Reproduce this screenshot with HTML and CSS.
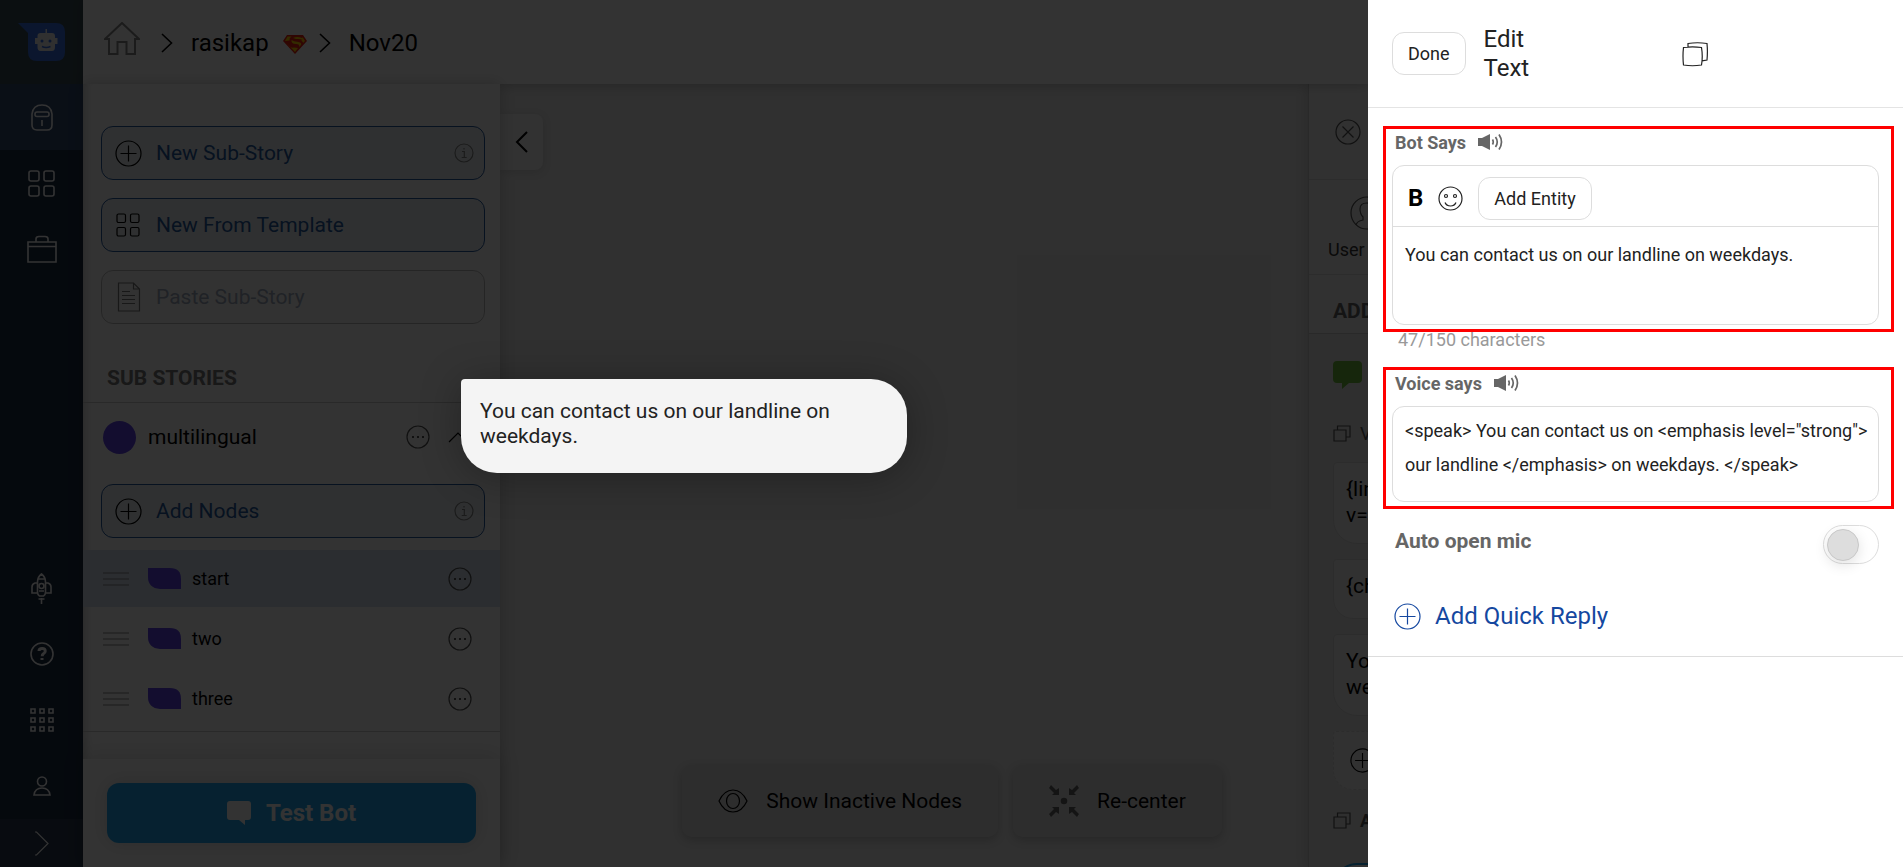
FILE: index.html
```html
<!DOCTYPE html>
<html lang="en">
<head>
<meta charset="utf-8">
<title>Bot builder</title>
<link rel="stylesheet" href="styles.css">
</head>
<body>
<svg class="defs" aria-hidden="true">
  <symbol id="plus" viewBox="0 0 27 27"><circle cx="13.5" cy="13.5" r="12.5"/><path d="M13.5 5.500v16M5.500 13.500h16"/></symbol>
  <symbol id="info" viewBox="0 0 20 20"><circle cx="10" cy="10" r="9"/><path d="M8 8.500h2.300v6M7.700 14.500h5M10 5v1.500"/></symbol>
  <symbol id="more" viewBox="0 0 24 24"><circle cx="12" cy="12" r="11"/><path d="M6 12h2M11 12h2M16 12h2" stroke-width="2"/></symbol>
  <symbol id="grip" viewBox="0 0 26 14"><path d="M0 1.500h26M0 7.500h26M0 13.500h26"/></symbol>
  <symbol id="node" viewBox="0 0 33 21"><path d="M0 0h22q11 0 11 11v10H12Q0 20 0 9z"/></symbol>
  <symbol id="copy" viewBox="0 0 26 26"><path d="M1.500 6.500q9-1.200 18 0 1.500 9 0 17.500-9 1.500-18 0-1-9 0-17.500zM6 6V2.500q9.500-1.500 19 0 .8 8 0 16.500l-5 .8"/></symbol>
  <symbol id="copy-square" viewBox="0 0 18 17"><path d="M1 5h12v11H1zM4.500 4.500V1H17v11h-3.500"/></symbol>
  <symbol id="speaker" viewBox="0 0 25 18"><path d="M0 5h4l8-4v16l-8-4H0z" fill="currentColor" stroke="none"/><path d="M14.500 6.500q1.500 2.500 0 5M17.500 4q3.500 5 0 10M21 1.500q5 7.500 0 15" stroke-width="1.700"/></symbol>
  <symbol id="chev" viewBox="0 0 12 20"><path d="M1 1l9.500 9L1 19"/></symbol>
</svg>
<div class="page">
  <div class="app">
    <nav class="rail" aria-label="Main">
      <a class="rail-logo" href="#" aria-label="Home">
        <svg width="48" height="39" viewBox="0 0 48 39"><path d="M0 0h38q9 0 9 9v20q0 9-9 9H19q-9 0-9-9V10z" fill="#3870e4"/><path d="M27.500 6h1.500v4h5q3 0 3 3v2h2.500v6H37v3q0 4-3 4H22.500q-3 0-3-4v-3H17v-6h2.500v-2q0-3 3-3h5z" fill="#eee"/><circle cx="24" cy="18" r="1.500" fill="#3870e4"/><circle cx="32" cy="18" r="1.500" fill="#3870e4"/><path d="M24 23.500q4 2 8.500 0" stroke="#3870e4" fill="none" stroke-width="1.500"/></svg>
      </a>
      <a class="rail-item active" href="#" aria-label="Bot"><svg width="22" height="27" viewBox="0 0 22 27"><path d="M1 10Q2 1 11 1t10 9v11q0 5-5 5H6q-5 0-5-5zM11 16v6"/><rect x="4" y="8" width="14" height="4.500" rx="2"/></svg></a>
      <a class="rail-item" href="#" aria-label="Templates"><svg width="27" height="27" viewBox="0 0 27 27"><rect x="1" y="1" width="10" height="10" rx="2"/><rect x="16" y="1" width="10" height="10" rx="2"/><rect x="1" y="16" width="10" height="10" rx="2"/><rect x="16" y="16" width="10" height="10" rx="2"/></svg></a>
      <a class="rail-item" href="#" aria-label="Business"><svg width="30" height="28" viewBox="0 0 30 28"><path d="M1 7h28v20H1zM1 11.500h28M9 7V4q0-2.500 3-2.500h6q3 0 3 2.500v3"/></svg></a>
      <a class="rail-item push" href="#" aria-label="Launch"><svg width="21" height="31" viewBox="0 0 21 31" stroke-width="2"><path d="M6.500 19V9q0-5 4-8 4 3 4 8v10q0 3-2 4h-4q-2-1-2-4zM7 6h7M6 10H4q-3 1-3 4v6h5M15 10h2q3 1 3 4v6h-5M8 18h5M7.500 26h6M10.500 25v6"/><circle cx="10.500" cy="13" r="2.500"/></svg></a>
      <a class="rail-item" href="#" aria-label="Help"><svg width="24" height="24" viewBox="0 0 24 24"><circle cx="12" cy="12" r="11"/><path d="M9 9q0-2.500 3.200-2.500T15.200 9.200q0 1.600-1.800 2.600-1.200.7-1.200 2.500M12 16v2" stroke-width="3"/></svg></a>
      <a class="rail-item" href="#" aria-label="Apps"><svg width="24" height="24" viewBox="0 0 24 24"><path d="M1 1h4v4H1zM10 1h4v4h-4zM19 1h4v4h-4zM1 10h4v4H1zM10 10h4v4h-4zM19 10h4v4h-4zM1 19h4v4H1zM10 19h4v4h-4zM19 19h4v4h-4z"/></svg></a>
      <a class="rail-item" href="#" aria-label="Account"><svg width="18" height="20" viewBox="0 0 18 20"><circle cx="9" cy="5.500" r="4.500"/><path d="M1 19q1-7 8-7t8 7z"/></svg></a>
      <button class="rail-expand" aria-label="Expand"><svg width="15" height="25" viewBox="0 0 15 25"><path d="M1 1h1.500L14 12.500 2.500 24H1"/></svg></button>
    </nav>

    <div class="main">
      <header class="topbar">
        <a class="home" href="#" aria-label="Home"><svg width="36" height="33" viewBox="0 0 36 33"><path d="M1 17L18 1l17 16h-4v15h-8.500V20h-9v12H5V17z"/></svg></a>
        <svg class="sep" width="12" height="20"><use href="#chev"/></svg>
        <a class="crumb" href="#">rasikap</a>
        <svg class="emblem" width="24" height="19" viewBox="0 0 24 19"><path d="M4 0h16l4 6-12 13L0 6z" fill="#f02010"/><path d="M4.500 1.500h4Q6 3 6.500 5.500L2 6zM10 3q4-2 9 0l1 2q-3-1.500-7-1zM8.500 5q2 1.500 7 2 3.500.5 2.500 3l-2 2q1-3-3-3-5 0-4.500-4zM19.500 2l2.500 4-2 2q0-2-3-2.500h2zM3 7.500l4 4.500q2 1 4 .5l4 .5-3 4z" fill="#ffd400"/></svg>
        <svg class="sep" width="12" height="20"><use href="#chev"/></svg>
        <a class="crumb" href="#">Nov20</a>
      </header>

      <div class="work">
        <aside class="sidebar">
          <div class="actions">
            <button class="tile"><svg class="ico" width="27" height="27"><use href="#plus"/></svg><span>New Sub-Story</span><svg class="hint" width="20" height="20"><use href="#info"/></svg></button>
            <button class="tile"><svg class="ico" width="27" height="27" viewBox="0 0 27 27"><rect x="2" y="2" width="8.500" height="8.500" rx="1.500"/><rect x="15.500" y="2" width="8.500" height="8.500" rx="1.500"/><rect x="2" y="15.500" width="8.500" height="8.500" rx="1.500"/><rect x="15.500" y="15.500" width="8.500" height="8.500" rx="1.500"/></svg><span>New From Template</span></button>
            <button class="tile off" disabled><svg class="ico" width="27" height="30" viewBox="0 0 27 30"><path d="M3.500 1h15l6 6v22h-21zM18.500 1v6h6M7 9.500h8M7 13.500h13M7 17.500h13M7 21.500h13"/></svg><span>Paste Sub-Story</span></button>
          </div>
          <h2 class="section">SUB STORIES</h2>
          <div class="story">
            <span class="dot"></span><span class="story-name">multilingual</span>
            <button class="plain" aria-label="Story options"><svg class="grey" width="24" height="24"><use href="#more"/></svg></button>
            <button class="plain" aria-label="Collapse story"><svg width="20" height="12" viewBox="0 0 20 12" stroke-width="2"><path d="M1 11l9-9 9 9"/></svg></button>
          </div>
          <div class="actions nodes-add">
            <button class="tile"><svg class="ico" width="27" height="27"><use href="#plus"/></svg><span>Add Nodes</span><svg class="hint" width="20" height="20"><use href="#info"/></svg></button>
          </div>
          <ul class="nodes">
            <li class="node on"><svg class="grip" width="26" height="15"><use href="#grip"/></svg><svg class="leaf" width="33" height="21"><use href="#node"/></svg><span>start</span><button class="plain" aria-label="Options for start"><svg class="grey" width="24" height="24"><use href="#more"/></svg></button></li>
            <li class="node"><svg class="grip" width="26" height="15"><use href="#grip"/></svg><svg class="leaf" width="33" height="21"><use href="#node"/></svg><span>two</span><button class="plain" aria-label="Options for two"><svg class="grey" width="24" height="24"><use href="#more"/></svg></button></li>
            <li class="node"><svg class="grip" width="26" height="15"><use href="#grip"/></svg><svg class="leaf" width="33" height="21"><use href="#node"/></svg><span>three</span><button class="plain" aria-label="Options for three"><svg class="grey" width="24" height="24"><use href="#more"/></svg></button></li>
          </ul>
          <div class="side-foot">
            <button class="test"><svg width="24" height="24" viewBox="0 0 24 24"><path d="M3 0h18q3 0 3 3v13q0 3-3 3h-3v5l-6-5H3q-3 0-3-3V3q0-3 3-3z"/></svg>Test Bot</button>
          </div>
        </aside>

        <section class="canvas">
          <button class="collapse" aria-label="Collapse sidebar"><svg width="13" height="22" viewBox="0 0 13 22"><path d="M12 1L2 11l10 10"/></svg></button>
          <div class="tools">
            <button class="tool"><svg width="30" height="24" viewBox="0 0 30 24"><path d="M1 12Q6 1 15 1t14 11q-5 11-14 11T1 12z"/><ellipse cx="15" cy="12" rx="6.500" ry="7.500"/></svg>Show Inactive Nodes</button>
            <button class="tool"><svg class="solid" width="30" height="32" viewBox="0 0 30 32"><path d="M2 0l5 5 3-2v7H3l2-2-5-5zM28 0l-5 5-3-2v7h7l-2-2 5-5zM2 32l5-5 3 2v-7H3l2 2-5 5zM28 32l-5-5-3 2v-7h7l-2 2 5 5z"/><circle cx="15" cy="16" r="3.300"/></svg>Re-center</button>
          </div>
        </section>

        <aside class="panel">
          <div class="panel-close"><button class="plain" aria-label="Close panel"><svg class="grey" width="26" height="26" viewBox="0 0 26 26"><circle cx="13" cy="13" r="12"/><path d="M7.500 7.500l11 11M18.500 7.500l-11 11"/></svg></button></div>
          <div class="panel-tab"><svg class="grey" width="34" height="34" viewBox="0 0 34 34"><circle cx="17" cy="17" r="16"/><path d="M6 29q1-4 7-5v-3q-3-3-3-8 0-6 7-6t7 6q0 5-3 8v3q6 1 7 5"/></svg><span>User</span></div>
          <h2 class="panel-head">ADD</h2>
          <div class="panel-body">
            <svg class="green" width="29" height="28" viewBox="0 0 29 28"><path d="M4 0h21q4 0 4 4v14q0 4-4 4h-9l-7 6v-6H4q-4 0-4-4V4q0-4 4-4z"/></svg>
            <div class="variant first"><svg width="18" height="17"><use href="#copy-square"/></svg><span>V</span></div>
            <div class="say">{lin<br>v=</div>
            <div class="say">{ch</div>
            <div class="say">You<br>we</div>
            <div class="say add"><svg width="25" height="25"><use href="#plus"/></svg></div>
            <div class="variant"><svg width="18" height="17"><use href="#copy-square"/></svg><b>A</b></div>
            <div class="more-box"></div>
          </div>
        </aside>
      </div>
    </div>
    <div class="dim"></div>
    <div class="preview">You can contact us on our landline on weekdays.</div>
  </div>

  <section class="drawer" aria-label="Edit text">
    <header class="drawer-head">
      <button class="btn">Done</button>
      <h1 class="drawer-title">Edit Text</h1>
      <button class="plain copy" aria-label="Copy"><svg width="26" height="26"><use href="#copy"/></svg></button>
    </header>
    <div class="drawer-body">
      <div class="marked">
        <label class="label" for="bot">Bot Says <svg width="25" height="18"><use href="#speaker"/></svg></label>
        <div class="field">
          <div class="bar">
            <button class="bold">B</button>
            <button class="plain" aria-label="Emoji"><svg width="25" height="25" viewBox="0 0 25 25"><circle cx="12.500" cy="12.500" r="11.500"/><circle cx="8" cy="10" r="1.500"/><circle cx="17" cy="10" r="1.500"/><path d="M7 16.500q1.500 3.500 5.500 3.500t5.500-3.500"/></svg></button>
            <button class="btn">Add Entity</button>
          </div>
          <textarea class="text bot" id="bot">You can contact us on our landline on weekdays.</textarea>
        </div>
      </div>
      <p class="count">47/150 characters</p>
      <div class="marked">
        <label class="label" for="voice">Voice says <svg width="25" height="18"><use href="#speaker"/></svg></label>
        <div class="field">
          <textarea class="text voice" id="voice">&lt;speak&gt; You can contact us on &lt;emphasis level="strong"&gt; our landline &lt;/emphasis&gt; on weekdays. &lt;/speak&gt;</textarea>
        </div>
      </div>
      <div class="mic">
        <label for="mic">Auto open mic</label>
        <input class="switch" type="checkbox" id="mic">
      </div>
      <button class="quick"><svg width="27" height="27"><use href="#plus"/></svg>Add Quick Reply</button>
    </div>
  </section>
</div>
</body>
</html>
```
FILE: styles.css
```css
* { box-sizing: border-box; }
body { margin: 0; font-family: Roboto, "Liberation Sans", sans-serif; font-size: 21px; color: #000; background: #fff; }
h1, h2, p, ul { margin: 0; padding: 0; }
button { font: inherit; color: inherit; background: none; border: 0; padding: 0; cursor: pointer; }
a { color: inherit; text-decoration: none; }
svg { display: block; flex: none; fill: none; stroke: currentColor; stroke-width: 1.2; }
.defs { position: absolute; width: 0; height: 0; }
.plain { display: block; }
.grey { color: #555; }

.page { display: grid; grid-template-columns: minmax(0, 1fr) 535px; height: 100vh; overflow: hidden; }
.app { position: relative; display: grid; grid-template-columns: 83px minmax(0, 1fr); min-height: 0; overflow: hidden; }

/* Icon rail */
.rail { display: flex; flex-direction: column; min-height: 0; background: #1c2d44; color: #fff; }
.rail-logo { flex: none; height: 84px; padding: 23px 0 0 18px; background: #3a4c54; }
.rail-logo svg { stroke: none; }
.rail-item { flex: none; display: grid; place-items: center; height: 66px; }
.rail-item svg { stroke-width: 1.6; }
.rail-item.active { background: #324a70; }
.push { margin-top: auto; }
.rail-expand { flex: none; display: grid; place-items: center; height: 48px; background: #2a3a50; }

.main { display: flex; flex-direction: column; min-width: 0; min-height: 0; }
.topbar { position: relative; flex: none; display: flex; align-items: center; height: 84px; padding: 2px 21px 0; font-size: 24px; background: #fff; box-shadow: 0 2px 10px rgba(0, 0, 0, .2); }
.home { color: #888; margin: -9px 21px 0 0; }
.home svg { stroke-width: 2; }
.sep { margin-right: 18px; stroke-width: 1.6; }
.emblem { margin: 2px 12px 0 14px; stroke: none; }

.work { flex: 1; display: grid; grid-template-columns: 417px minmax(0, 1fr) 60px; min-height: 0; }

/* Sidebar */
.sidebar { position: relative; display: flex; flex-direction: column; min-height: 0; background: #fff; box-shadow: 0 0 14px rgba(0, 0, 0, .2), inset 8px 0 8px -6px rgba(0, 0, 0, .2); }
.actions { display: flex; flex-direction: column; gap: 18px; padding: 42px 15px 0 18px; }
.tile { display: flex; align-items: center; width: 100%; height: 54px; padding: 0 10px 0 13px; gap: 14px; color: #265a9e; background: #ecf1f6; border: 1px solid #265a9e; border-radius: 12px; }
.ico { color: #000; }
.hint { margin-left: auto; color: #888; }
.tile.off { background: #fafafa; border-color: #bbb; color: #9fabbf; }
.off .ico { color: #777; }
.section { padding: 42px 24px 12px; font-size: 21px; line-height: 24px; color: #777; border-bottom: 1px solid #ccc; }
.story { display: flex; align-items: center; height: 68px; padding: 0 32px 0 20px; gap: 12px; }
.dot { width: 33px; height: 33px; border-radius: 50%; background: #5f43e9; }
.story-name { flex: 1; }
.story .plain + .plain { margin: 0 0 0 6px; }
.nodes-add { padding-top: 13px; }
.nodes { display: flex; flex-direction: column; gap: 3px; margin-top: 12px; padding-bottom: 4px; list-style: none; font-size: 18px; border-bottom: 1px solid #ccc; }
.node { display: flex; align-items: center; height: 57px; padding: 0 28px 0 20px; }
.node.on { background: #d8e2f0; }
.node .plain { margin-left: auto; }
.grip { color: #888; stroke-width: 1; }
.leaf { margin: 0 11px 0 19px; fill: #5f43e9; stroke: none; }
.side-foot { margin-top: auto; padding: 24px; background: #fff; box-shadow: 0 -4px 20px rgba(0, 0, 0, .12); }
.test { display: flex; align-items: center; justify-content: center; gap: 15px; width: 100%; height: 60px; border-radius: 12px; background: #22a7f0; color: #fff; font-size: 24px; font-weight: 700; box-shadow: 0 0 20px rgba(0, 0, 0, .15); }
.test svg { fill: #fff; stroke: none; }

/* Canvas */
.canvas { display: flex; flex-direction: column; justify-content: space-between; min-width: 0; background: #ededed; }
.collapse { display: grid; place-items: center; width: 43px; height: 56px; margin-top: 30px; background: #f8f8f8; border-radius: 0 8px 8px 0; box-shadow: 0 2px 10px rgba(0, 0, 0, .12); }
.collapse svg { stroke-width: 2; }
.tools { display: flex; justify-content: center; gap: 15px; padding: 0 0 30px 96px; }
.tool { display: flex; align-items: center; gap: 18px; height: 72px; padding: 0 36px; border-radius: 10px; background: #e2e2e2; box-shadow: 0 3px 10px rgba(0, 0, 0, .2); white-space: nowrap; }
.tool .solid { fill: #666; stroke: none; }

/* Node panel, partly under the drawer */
.panel { overflow: hidden; background: #f6f6f6; border-left: 1px solid #ccc; white-space: nowrap; box-shadow: -2px 0 10px rgba(0, 0, 0, .12); }
.panel-close { height: 96px; padding: 35px 0 0 26px; border-bottom: 1px solid #ddd; }
.panel-tab { height: 95px; padding: 16px 0 0 19px; font-size: 18px; color: #333; border-bottom: 1px solid #ddd; }
.panel-tab svg { margin: 0 0 9px 22px; }
.panel-head { height: 59px; padding: 24px 0 0 24px; font-size: 21px; line-height: 24px; color: #666; border-bottom: 1px solid #ccc; }
.panel-body { padding: 27px 0 0 24px; background: #ececec; }
.green { fill: #6fbf3c; stroke: none; }
.variant { display: flex; align-items: center; gap: 9px; height: 58px; padding-top: 2px; font-size: 18px; color: #555; }
.variant.first { padding-top: 16px; height: 73px; }
.say { width: 372px; margin-bottom: 15px; padding: 13px 12px 15px; line-height: 26px; min-height: 60px; background: #f3f3f3; border: 1px solid #ddd; border-radius: 4px 36px 36px 24px; }
.say.add { min-height: 58px; margin: 0; padding: 16px; border-style: dashed; }
.more-box { width: 372px; height: 60px; background: #fff; border: 2px solid #22a7f0; border-radius: 24px; margin-top: 15px; }

/* Shade over the editor, with the live bubble on top */
.dim { position: absolute; inset: 0; background: rgba(0, 0, 0, .8); }
.preview { position: absolute; left: 461px; top: 379px; width: 446px; padding: 20px 20px 24px 19px; line-height: 25px; color: #222; background: #f4f4f4; border-radius: 4px 36px 36px 36px; box-shadow: 0 4px 40px rgba(0, 0, 0, .3); }

/* Drawer */
.drawer { min-width: 0; background: #fff; color: #222; }
.drawer-head { display: flex; align-items: center; height: 108px; padding: 0 24px; border-bottom: 1px solid #e4e4e4; }
.btn { height: 43px; padding: 0 15px; font-size: 18px; border: 1px solid #ddd; border-radius: 12px; white-space: nowrap; }
.drawer-title { width: 72px; margin-left: 18px; font-size: 24px; line-height: 29px; font-weight: 400; }
.copy { margin-left: 126px; }
.drawer-body { padding: 18px 9px 26px 15px; border-bottom: 1px solid #ddd; }
.marked { padding: 3px 12px 4px 6px; border: 3px solid #f00; }
.label { display: flex; align-items: center; gap: 12px; height: 20px; padding-left: 3px; margin-bottom: 13px; font-size: 18px; font-weight: 700; color: #666; }
.field { border: 1px solid #ddd; border-radius: 12px; overflow: hidden; }
.bar { display: flex; align-items: center; gap: 15px; height: 61px; padding: 4px 15px 0; border-bottom: 1px solid #ddd; }
.bold { color: #000; font-size: 24px; font-weight: 700; }
.text { display: block; width: 100%; padding: 0 2px 0 12px; border: 0; outline: 0; resize: none; background: none; color: #222; font: 18px/34px Roboto, "Liberation Sans", sans-serif; overflow: hidden; }
.bot { height: 97px; padding-top: 11px; }
.voice { height: 94px; padding-top: 7px; }
.count { padding-left: 15px; margin-bottom: 20px; font-size: 18px; line-height: 15px; color: #999; }
.mic { display: flex; align-items: center; justify-content: space-between; padding: 16px 15px 0 12px; font-weight: 700; color: #666; }
.mic label { margin-bottom: 8px; }
.switch { appearance: none; width: 56px; height: 39px; margin: 0; padding: 3px; border: 1px solid #ddd; border-radius: 20px; background: #fff; cursor: pointer; }
.switch::before { content: ""; display: block; width: 30px; height: 30px; border: 1px solid #c8c8c8; border-radius: 50%; background: #ddd; box-shadow: 0 4px 14px rgba(0, 0, 0, .12); }
.switch:checked::before { margin-left: 18px; }
.quick { display: flex; align-items: center; gap: 14px; margin: 38px 0 0 11px; font-size: 24px; line-height: 28px; color: #1548a0; }
```
